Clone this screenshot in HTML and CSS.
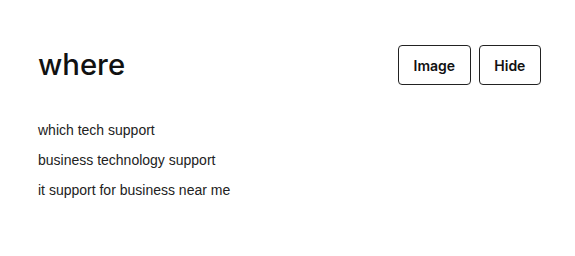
FILE: index.html
```html
<!DOCTYPE html>
<html>
<head>
<meta charset="utf-8">
<link rel="stylesheet" href="styles.css">
</head>
<body>
<div class="page">
  <div class="header">
    <h1 class="title">where</h1>
    <div class="actions">
      <button class="btn">Image</button>
      <button class="btn">Hide</button>
    </div>
  </div>
  <ul class="list">
    <li>which tech support</li>
    <li>business technology support</li>
    <li>it support for business near me</li>
  </ul>
</div>
</body>
</html>
```
FILE: styles.css
```css
html, body {
  margin: 0;
  padding: 0;
  background: #fff;
}
.page {
  padding: 45px 34px 0 38px;
}
.header {
  display: flex;
  justify-content: space-between;
  align-items: center;
  height: 40px;
}
.title {
  margin: 0;
  font-family: Inter, "Liberation Sans", sans-serif;
  font-weight: 500;
  font-size: 29.3px;
  line-height: 1;
  color: #111;
}
.actions {
  display: flex;
  gap: 8px;
}
.btn {
  height: 40px;
  padding: 0 14.6px;
  border: 1px solid #222;
  border-radius: 4px;
  background: #fff;
  font-family: Inter, "Liberation Sans", sans-serif;
  font-weight: 600;
  font-size: 14px;
  color: #111;
}
.list {
  list-style: none;
  margin: 30px 0 0;
  padding: 0;
  font-family: "Liberation Sans", Arial, sans-serif;
  font-size: 14px;
  color: #222;
}
.list li {
  line-height: 30px;
}
```
